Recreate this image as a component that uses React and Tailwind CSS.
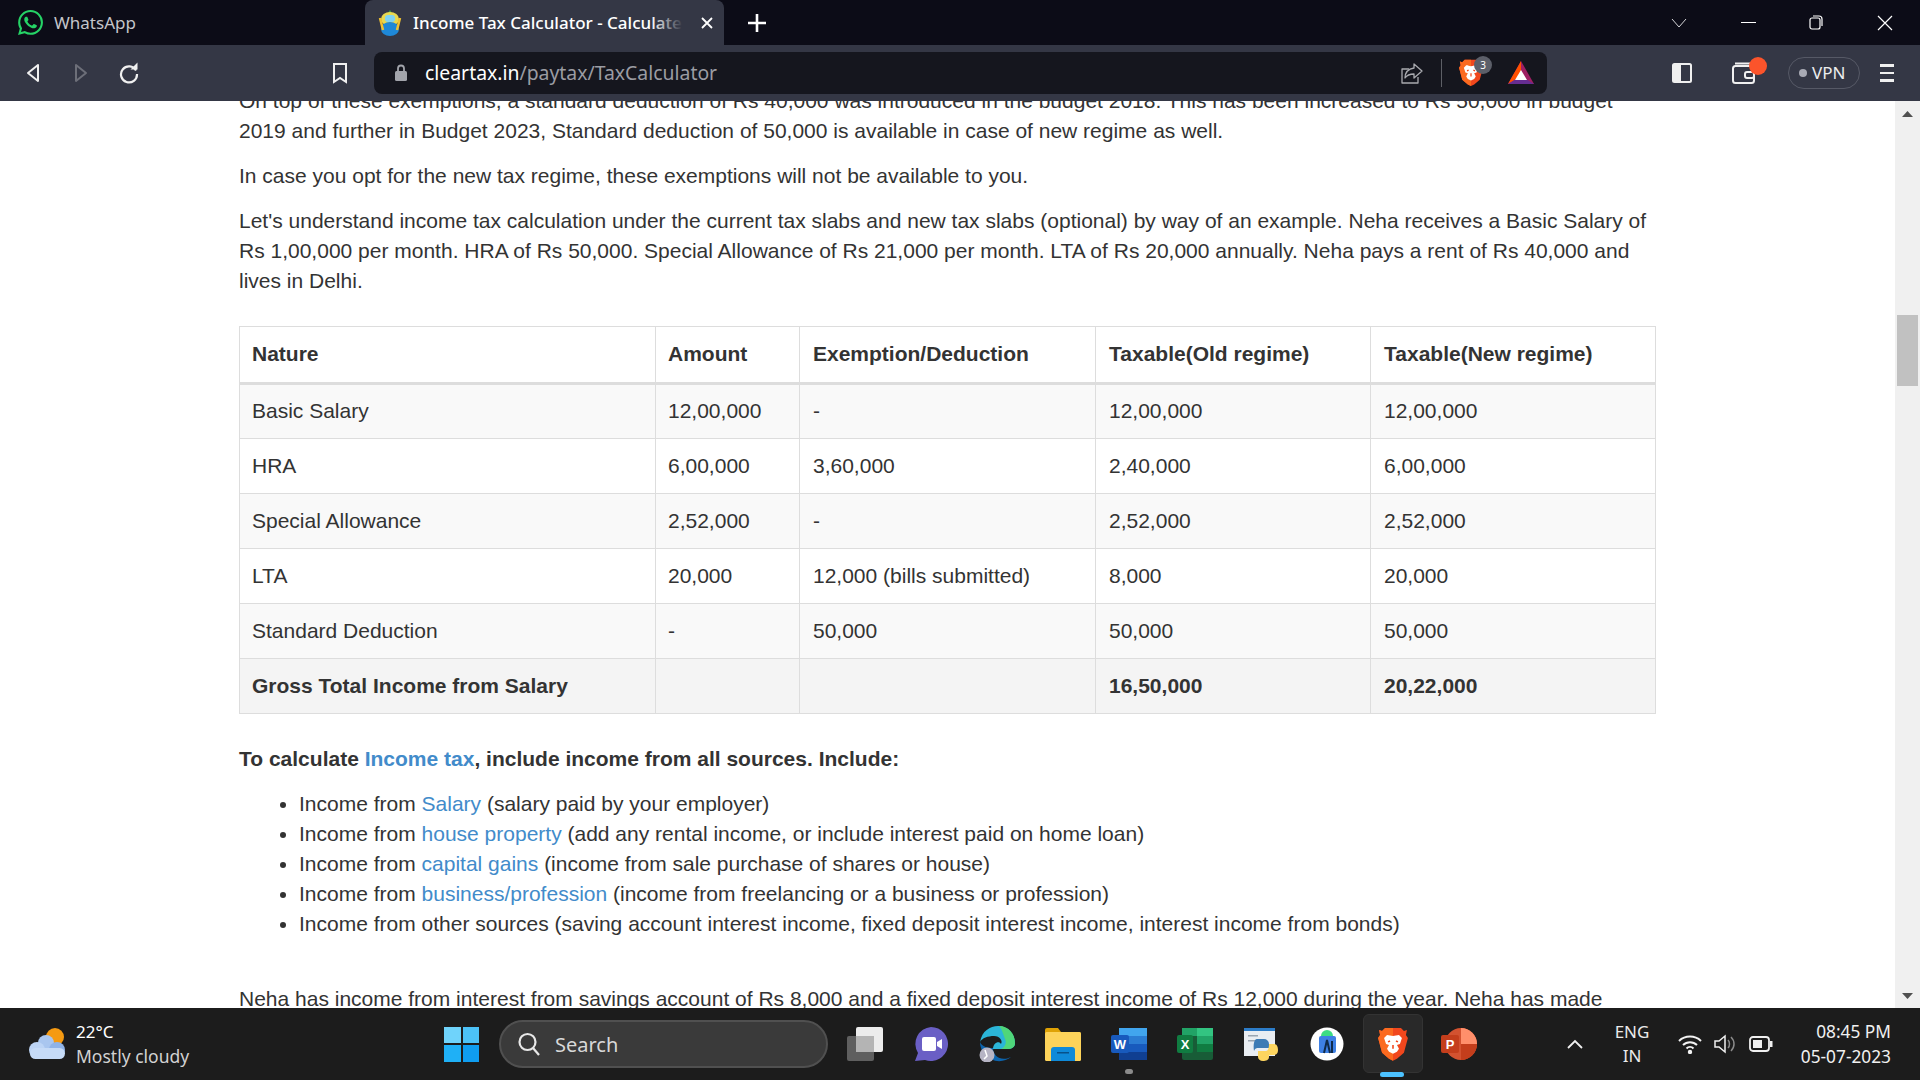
import React from "react";
import { SiWhatsapp } from "react-icons/si";

const chrome = { fontFamily: '"Noto Sans", "Open Sans", sans-serif' };

function BraveIcon({ size = 30, face = "#ffffff" }) {
  return (
    <svg width={size} height={size * 1.16} viewBox="0 0 30 35">
      <path d="M7 1h16l3 3 3-1-1 5 2 3-4 15-7 6-4 2-4-2-7-6L0 11l2-3-1-5 3 1z" fill="#f1471d" />
      <path d="M7 1h8v33l-4-2-7-6L0 11l2-3-1-5 3 1z" fill="#fb6a1f" />
      <path d="M15 9c2 0 4-1 6-1l3 3-2 6-3 1 2 4-2 3-4 2-4-2-2-3 2-4-3-1-2-6 3-3c2 0 4 1 6 1z" fill={face} />
      <path d="M12 14l-2 1M18 14l2 1M15 18v4" stroke="#f1471d" strokeWidth="1.6" fill="none" />
    </svg>
  );
}

function Slot({ children }) {
  return <div className="w-[66px] h-full flex items-center justify-center">{children}</div>;
}

const rows = [
  ["Basic Salary", "12,00,000", "-", "12,00,000", "12,00,000"],
  ["HRA", "6,00,000", "3,60,000", "2,40,000", "6,00,000"],
  ["Special Allowance", "2,52,000", "-", "2,52,000", "2,52,000"],
  ["LTA", "20,000", "12,000 (bills submitted)", "8,000", "20,000"],
  ["Standard Deduction", "-", "50,000", "50,000", "50,000"],
];

function Link({ children }) {
  return <span className="text-[#428bca]">{children}</span>;
}

function TabBar() {
  return (
    <div style={chrome} className="h-[45px] bg-[#0c0c17] flex items-stretch text-white shrink-0">
      <div className="w-[365px] flex items-center pl-[18px]">
        <SiWhatsapp className="w-[25px] h-[25px] text-[#25d366]" />
        <span className="ml-[11px] text-[17px] text-[#c4c5ca]">WhatsApp</span>
      </div>
      <div className="w-[359px] bg-[#343745] rounded-t-[8px] flex items-center pl-[13px] relative">
        <svg width="24" height="26" viewBox="0 0 24 26">
          <path d="M12 0l2 3h-4z" fill="#3c9a49" />
          <ellipse cx="12" cy="9" rx="9" ry="7" fill="#e8d84e" />
          <ellipse cx="12" cy="19" rx="9" ry="7" fill="#1e88d8" />
          <rect x="7" y="5" width="10" height="7" rx="3" fill="#7fd3f2" />
          <path d="M2 8l3 12M22 8l-3 12" stroke="#f2c230" strokeWidth="2.5" />
        </svg>
        <div className="ml-[11px] w-[270px] relative overflow-hidden whitespace-nowrap text-[17px] font-medium">
          Income Tax Calculator - Calculate Income
          <div className="absolute right-0 top-0 bottom-0 w-[32px] bg-gradient-to-r from-transparent to-[#343745]" />
        </div>
        <svg className="ml-[17px]" width="14" height="14" viewBox="0 0 14 14" stroke="#fff" strokeWidth="1.8"><path d="M2 2l10 10M12 2L2 12" /></svg>
      </div>
      <div className="w-[66px] flex items-center justify-center">
        <svg width="20" height="20" viewBox="0 0 20 20" stroke="#fff" strokeWidth="2.6"><path d="M10 1v18M1 10h18" /></svg>
      </div>
      <div className="flex-1 flex items-center justify-end">
        <svg className="mr-[54px]" width="16" height="10" viewBox="0 0 16 10" fill="none" stroke="#d5d5d8" strokeWidth="1"><path d="M1 1l7 8 7-8" /></svg>
        <div className="w-[15px] h-[1.5px] bg-white mr-[53px]" />
        <svg className="mr-[54px]" width="14" height="15" viewBox="0 0 14 15" fill="none" stroke="#fff" strokeWidth="1.2"><rect x="1" y="3" width="10" height="11" rx="2" /><path d="M4 1h6a3 3 0 0 1 3 3v7" /></svg>
        <svg className="mr-[27px]" width="16" height="16" viewBox="0 0 16 16" stroke="#fff" strokeWidth="1.2"><path d="M1 1l14 14M15 1L1 15" /></svg>
      </div>
    </div>
  );
}

function ToolBar() {
  return (
    <div style={chrome} className="h-[56px] bg-[#343745] flex items-center pl-[9px] shrink-0 text-[#eceded]">
      <div className="w-[48px] flex justify-center">
        <svg width="16" height="20" viewBox="0 0 16 20" fill="none" stroke="#f0f0f0" strokeWidth="2" strokeLinejoin="round"><path d="M13 2L3 10l10 8z" /></svg>
      </div>
      <div className="w-[48px] flex justify-center">
        <svg width="16" height="20" viewBox="0 0 16 20" fill="none" stroke="#6d6f79" strokeWidth="2" strokeLinejoin="round"><path d="M3 2l10 8-10 8z" /></svg>
      </div>
      <div className="w-[48px] flex justify-center">
        <svg width="22" height="22" viewBox="0 0 22 22" fill="none" stroke="#f0f0f0" strokeWidth="2.2"><path d="M18 8.5A8 8 0 1 0 19 12" /><path d="M12.5 7.5h7v-7z" fill="#f0f0f0" stroke="none" /></svg>
      </div>
      <div className="ml-[163px] w-[48px] flex justify-center">
        <svg width="16" height="22" viewBox="0 0 16 22" fill="none" stroke="#f0f0f0" strokeWidth="2"><path d="M2 2h12v18l-6-4-6 4z" /></svg>
      </div>
      <div className="ml-[10px] w-[1173px] h-[42px] bg-[#15161e] rounded-[8px] flex items-center pr-[12px]">
        <svg className="ml-[20px]" width="14" height="18" viewBox="0 0 14 18"><rect x="1" y="7" width="12" height="10" rx="1.5" fill="#a2a4ab" /><path d="M4 7V4.5a3 3 0 0 1 6 0V7" fill="none" stroke="#a2a4ab" strokeWidth="1.8" /></svg>
        <div className="ml-[17px] flex-1 text-[19.4px]">
          <span className="text-white">cleartax.in</span><span className="text-[#9b9ca3]">/paytax/TaxCalculator</span>
        </div>
        <svg width="24" height="24" viewBox="0 0 24 24" fill="none" stroke="#a9aaaf" strokeWidth="1.3" strokeLinejoin="round"><path d="M9 8H2v14h16v-6" /><path d="M14 3l8 7-8 7v-4c-4 0-7 1-9 4 0-5 3-9 9-10z" /></svg>
        <div className="ml-[17px] w-[1.5px] h-[28px] bg-[#5d5f66]" />
        <div className="ml-[17px] relative w-[24px] h-[32px] flex items-center">
          <BraveIcon size={24} />
          <div className="absolute left-[15px] -top-[1px] w-[18px] h-[18px] rounded-full bg-[#5c5f69] text-white text-[10px] flex items-center justify-center">3</div>
        </div>
        <svg className="ml-[24px]" width="28" height="26" viewBox="0 0 28 26">
          <path d="M14 1L1 24h26z" fill="#9e1f63" />
          <path d="M14 1L1 24l13-8z" fill="#ff5000" />
          <path d="M1 24h26l-13-8z" fill="#662d91" />
          <path d="M14 10l-6 10h12z" fill="#fff" />
        </svg>
      </div>
      <svg className="ml-[125px]" width="20" height="20" viewBox="0 0 20 20"><rect x="1" y="1" width="18" height="18" rx="1.5" fill="none" stroke="#f0f0f0" strokeWidth="2" /><rect x="1" y="1" width="8" height="18" fill="#f0f0f0" /></svg>
      <div className="ml-[40px] relative w-[24px] h-[22px]">
        <svg width="24" height="22" viewBox="0 0 24 22" fill="none" stroke="#f0f0f0" strokeWidth="2"><rect x="1" y="4" width="21" height="17" rx="2.5" /><path d="M3 1.5h15" /><rect x="13" y="10" width="9" height="6" rx="2" /></svg>
        <div className="absolute left-[17px] -top-[5px] w-[18px] h-[18px] rounded-full bg-[#fb542b]" />
      </div>
      <div className="ml-[32px] w-[72px] h-[32px] rounded-full border border-[#565966] flex items-center pl-[10px] gap-[5px]">
        <div className="w-[8px] h-[8px] rounded-full bg-[#a8aab4]" />
        <span className="text-[17px] text-[#eceded]">VPN</span>
      </div>
      <div className="ml-[20px] w-[14px] flex flex-col gap-[5px]">
        <div className="h-[2.5px] bg-[#f0f0f0]" />
        <div className="h-[2.5px] bg-[#f0f0f0]" />
        <div className="h-[2.5px] bg-[#f0f0f0]" />
      </div>
    </div>
  );
}

function Article() {
  const cell = "border border-[#dddddd] pr-[12px] align-middle h-[55px]";
  const pad = (j) => (j >= 2 ? "pl-[13px]" : "pl-[12px]");
  return (
    <div className="flex-1 overflow-hidden pl-[239px] bg-white">
      <div style={{ fontFamily: '"Liberation Sans", Arial, sans-serif' }} className="w-[1417px] -mt-[15px] text-[21px] leading-[30px] text-[#333333]">
        <p className="mb-[15px]">On top of these exemptions, a standard deduction of Rs 40,000 was introduced in the budget 2018. This has been increased to Rs 50,000 in budget 2019 and further in Budget 2023, Standard deduction of 50,000 is available in case of new regime as well.</p>
        <p className="mb-[15px]">In case you opt for the new tax regime, these exemptions will not be available to you.</p>
        <p className="mb-[30px]">Let's understand income tax calculation under the current tax slabs and new tax slabs (optional) by way of an example. Neha receives a Basic Salary of Rs 1,00,000 per month. HRA of Rs 50,000. Special Allowance of Rs 21,000 per month. LTA of Rs 20,000 annually. Neha pays a rent of Rs 40,000 and lives in Delhi.</p>
        <table className="w-[1416px] table-fixed border-collapse mb-[30px]">
          <colgroup>
            <col className="w-[416px]" />
            <col className="w-[144px]" />
            <col className="w-[296px]" />
            <col className="w-[275px]" />
            <col className="w-[285px]" />
          </colgroup>
          <thead>
            <tr>
              {["Nature", "Amount", "Exemption/Deduction", "Taxable(Old regime)", "Taxable(New regime)"].map((h, j) => (
                <th key={h} className={`border border-[#dddddd] border-b-[3px] pr-[12px] pb-[2px] h-[57px] text-left font-bold ${pad(j)}`}>{h}</th>
              ))}
            </tr>
          </thead>
          <tbody>
            {rows.map((r, i) => (
              <tr key={r[0]} className={i % 2 === 0 ? "bg-[#f9f9f9]" : "bg-white"}>
                {r.map((c, j) => (
                  <td key={j} className={`${cell} ${pad(j)} ${i === 0 ? "pb-[2px]" : ""}`}>{c}</td>
                ))}
              </tr>
            ))}
            <tr className="bg-[#f4f4f4] font-bold">
              <td className={`${cell} pl-[12px]`}>Gross Total Income from Salary</td>
              <td className={`${cell} pl-[12px]`}></td>
              <td className={`${cell} pl-[13px]`}></td>
              <td className={`${cell} pl-[13px]`}>16,50,000</td>
              <td className={`${cell} pl-[13px]`}>20,22,000</td>
            </tr>
          </tbody>
        </table>
        <p className="mb-[15px] font-bold">To calculate <Link>Income tax</Link>, include income from all sources. Include:</p>
        <ul className="list-disc pl-[60px] mb-[45px]">
          <li>Income from <Link>Salary</Link> (salary paid by your employer)</li>
          <li>Income from <Link>house property</Link> (add any rental income, or include interest paid on home loan)</li>
          <li>Income from <Link>capital gains</Link> (income from sale purchase of shares or house)</li>
          <li>Income from <Link>business/profession</Link> (income from freelancing or a business or profession)</li>
          <li>Income from other sources (saving account interest income, fixed deposit interest income, interest income from bonds)</li>
        </ul>
        <p>Neha has income from interest from savings account of Rs 8,000 and a fixed deposit interest income of Rs 12,000 during the year. Neha has made</p>
      </div>
    </div>
  );
}

function Scrollbar() {
  return (
    <div className="w-[25px] bg-[#f0f0f0] flex flex-col items-center shrink-0">
      <svg className="mt-[10px]" width="11" height="6" viewBox="0 0 11 6"><path d="M5.5 0L11 6H0z" fill="#505050" /></svg>
      <div className="mt-[198px] w-[21px] h-[71px] bg-[#c1c1c1]" />
      <div className="flex-1" />
      <svg className="mb-[9px]" width="11" height="6" viewBox="0 0 11 6"><path d="M0 0h11L5.5 6z" fill="#505050" /></svg>
    </div>
  );
}

function Taskbar() {
  return (
    <div style={chrome} className="h-[72px] bg-[#1c1c1c] flex items-center shrink-0 text-white">
      <div className="w-[444px] h-full flex items-center pl-[29px]">
        <svg width="37" height="32" viewBox="0 0 37 32">
          <circle cx="26" cy="9" r="9" fill="#f59a12" />
          <circle cx="17" cy="15" r="8" fill="#a9c6ef" />
          <circle cx="8" cy="22" r="8" fill="#bcd4f5" />
          <circle cx="28" cy="22" r="8" fill="#8fb3e8" />
          <rect x="1" y="20" width="35" height="11" rx="5.5" fill="#c6dbf7" />
        </svg>
        <div className="ml-[10px] flex flex-col">
          <span className="text-[17px] leading-[24px]">22°C</span>
          <span className="text-[17.5px] leading-[24px] text-[#d2d2d2]">Mostly cloudy</span>
        </div>
      </div>
      <div className="w-[35px] h-[35px] grid grid-cols-2 gap-[2px]">
        <div className="bg-[#6fd3fb]" />
        <div className="bg-[#4cc2f7]" />
        <div className="bg-[#1fb0f6]" />
        <div className="bg-[#0f9df0]" />
      </div>
      <div className="ml-[20px] w-[329px] h-[48px] rounded-full bg-[#3a3a3a] border-2 border-[#505050] flex items-center pl-[16px]">
        <svg width="24" height="26" viewBox="0 0 24 26" fill="none" stroke="#e8e8e8" strokeWidth="2.2"><circle cx="10.5" cy="11" r="8" /><path d="M16 17l6 7" /></svg>
        <span className="ml-[14px] pt-[2px] text-[20px] text-[#d8d8d8]">Search</span>
      </div>
      <div className="ml-[4px] h-full flex">
        <Slot>
          <svg width="36" height="34" viewBox="0 0 36 34">
            <rect x="0" y="9" width="27" height="25" rx="2" fill="#5f5f5f" />
            <rect x="9" y="0" width="27" height="25" rx="2" fill="#ececec" />
            <rect x="9" y="9" width="18" height="16" fill="#b4b4b4" />
          </svg>
        </Slot>
        <Slot>
          <svg width="34" height="34" viewBox="0 0 34 34">
            <path d="M17 0a17 17 0 1 1-6 32.9L1 34l3-8A17 17 0 0 1 17 0z" fill="#6a5fc5" />
            <rect x="8" y="10" width="14" height="14" rx="2" fill="#fff" />
            <path d="M23 15l5-3v10l-5-3z" fill="#fff" />
          </svg>
        </Slot>
        <Slot>
          <svg width="36" height="36" viewBox="0 0 36 36">
            <path d="M1 16C3 5 11 0 19 0c10 0 17 8 17 17 0 4-3 6-8 6H14c0-6 6-9 8-5 2-3-1-8-7-8C9 10 3 12 1 16z" fill="#2bb5d8" />
            <path d="M20 0c10 0 16 8 16 17 0 4-3 6-8 6h-6c4-2 6-6 4-10-2-5-3-10-6-13z" fill="#4fd67a" />
            <path d="M14 22c0 8 8 14 18 9-5 4-13 6-20 2-7-4-11-10-11-17 2 5 8 6 13 6z" fill="#0c64ad" />
            <circle cx="8" cy="29" r="7.5" fill="#b6b4c4" />
            <path d="M6 24l2 6-3 3" stroke="#fff" strokeWidth="1.5" fill="none" />
          </svg>
        </Slot>
        <Slot>
          <svg width="36" height="33" viewBox="0 0 36 33">
            <path d="M0 2a2 2 0 0 1 2-2h11l3 4h18a2 2 0 0 1 2 2v4H0z" fill="#dfa205" />
            <rect x="0" y="4" width="36" height="29" rx="1.5" fill="#fdd35a" />
            <path d="M6 33V22a3 3 0 0 1 3-3h18a3 3 0 0 1 3 3v11z" fill="#0f8ad9" />
            <rect x="12" y="24" width="12" height="1.5" fill="#08518a" />
          </svg>
        </Slot>
        <div className="w-[66px] h-full flex items-center justify-center relative">
          <svg width="36" height="32" viewBox="0 0 36 32">
            <rect x="8" y="0" width="28" height="32" rx="2" fill="#2b7cd3" />
            <rect x="8" y="0" width="28" height="8" fill="#41a5ee" />
            <rect x="8" y="16" width="28" height="8" fill="#185abd" />
            <rect x="8" y="24" width="28" height="8" fill="#103f91" />
            <rect x="0" y="7" width="18" height="18" rx="2" fill="#185abd" />
            <text x="9" y="21" textAnchor="middle" fontSize="13" fontWeight="700" fill="#fff" fontFamily="Liberation Sans">W</text>
          </svg>
          <div className="absolute bottom-[6px] w-[8px] h-[5px] rounded-full bg-[#8b8b8b]" />
        </div>
        <Slot>
          <svg width="36" height="32" viewBox="0 0 36 32">
            <rect x="5" y="0" width="31" height="32" rx="2" fill="#185c37" />
            <rect x="20" y="0" width="16" height="8" fill="#33c481" />
            <rect x="5" y="0" width="15" height="8" fill="#21a366" />
            <rect x="20" y="8" width="16" height="8" fill="#21a366" />
            <rect x="20" y="16" width="16" height="8" fill="#107c41" />
            <rect x="0" y="7" width="16" height="18" rx="2" fill="#107c41" />
            <text x="8" y="21" textAnchor="middle" fontSize="13" fontWeight="700" fill="#fff" fontFamily="Liberation Sans">X</text>
          </svg>
        </Slot>
        <Slot>
          <svg width="34" height="33" viewBox="0 0 34 33">
            <rect x="0" y="0" width="31" height="28" fill="#e9edf2" />
            <rect x="0" y="0" width="31" height="3" fill="#2c7cc8" />
            <rect x="4" y="7" width="10" height="1.5" fill="#9aa5b1" />
            <rect x="4" y="12" width="8" height="1.5" fill="#9aa5b1" />
            <path d="M13 11h7a5 5 0 0 1 5 5v4H13a4 4 0 0 0-3 3c-1-6 0-12 3-12z" fill="#3d7bb5" />
            <path d="M25 16h5c3 0 4 3 4 6 0 4-2 5-5 5h-4v2c0 3-3 4-6 4s-5-2-5-4v-6h8c2 0 3-3 3-7z" fill="#fdd55f" />
          </svg>
        </Slot>
        <Slot>
          <svg width="34" height="34" viewBox="0 0 34 34">
            <circle cx="17" cy="17" r="16.5" fill="#fff" />
            <rect x="9" y="9" width="17" height="17" rx="2" fill="#3e80e4" />
            <path d="M11 9a6 6 0 0 1 12 0z" fill="#3ddc84" />
            <path d="M14 26l3-13 3 13M22 14v12" stroke="#0f2a4a" strokeWidth="2" fill="none" />
          </svg>
        </Slot>
        <div className="w-[66px] h-full flex items-center justify-center relative">
          <div className="absolute left-[3px] top-[6px] w-[60px] h-[59px] rounded-[6px] bg-[#292929] border border-[#333333]" />
          <div className="relative"><BraveIcon size={30} /></div>
          <div className="absolute left-[20px] bottom-[3px] w-[24px] h-[5px] rounded-full bg-[#4cc2ff]" />
        </div>
        <Slot>
          <svg width="36" height="32" viewBox="0 0 36 32">
            <circle cx="20" cy="16" r="16" fill="#d35230" />
            <path d="M20 0a16 16 0 0 1 16 16H20z" fill="#ff8f6b" />
            <path d="M20 16h16a16 16 0 0 1-16 16z" fill="#c43e1c" />
            <rect x="0" y="7" width="18" height="18" rx="2" fill="#c43e1c" />
            <text x="9" y="21" textAnchor="middle" fontSize="13" fontWeight="700" fill="#fff" fontFamily="Liberation Sans">P</text>
          </svg>
        </Slot>
      </div>
      <svg className="ml-[75px]" width="16" height="10" viewBox="0 0 16 10" fill="none" stroke="#f0f0f0" strokeWidth="1.8"><path d="M1 9l7-7 7 7" /></svg>
      <div className="ml-[24px] w-[50px] flex flex-col items-center text-[17px] leading-[24px] text-[#eaeaea]">
        <span>ENG</span>
        <span>IN</span>
      </div>
      <svg className="ml-[21px]" width="24" height="20" viewBox="0 0 24 20" fill="none" stroke="#f2f2f2" strokeWidth="2"><path d="M1 7a16 16 0 0 1 22 0M5 11a10 10 0 0 1 14 0M8.5 14.5a5 5 0 0 1 7 0" /><circle cx="12" cy="18" r="1.2" fill="#f2f2f2" /></svg>
      <svg className="ml-[12px]" width="22" height="22" viewBox="0 0 22 22" fill="none" stroke="#f0f0f0" strokeWidth="1.5"><path d="M1 8v6h4l6 5V3L5 8z" /><path d="M14 7c2 2 2 6 0 8M17 4c4 4 4 10 0 14" stroke="#8a8a8a" /></svg>
      <svg className="ml-[13px]" width="24" height="16" viewBox="0 0 24 16" fill="none" stroke="#f0f0f0" strokeWidth="1.8"><rect x="1" y="1" width="19" height="14" rx="3" /><rect x="4" y="4" width="9" height="8" fill="#f0f0f0" stroke="none" /><rect x="21" y="5" width="2.5" height="6" fill="#f0f0f0" stroke="none" /></svg>
      <div className="ml-auto mr-[29px] flex flex-col items-end text-[17.3px] leading-[25px] text-[#f0f0f0]">
        <span>08:45 PM</span>
        <span>05-07-2023</span>
      </div>
    </div>
  );
}

export default function App() {
  return (
    <div className="w-[1920px] h-[1080px] flex flex-col overflow-hidden">
      <TabBar />
      <ToolBar />
      <div className="flex-1 min-h-0 flex">
        <Article />
        <Scrollbar />
      </div>
      <Taskbar />
    </div>
  );
}
